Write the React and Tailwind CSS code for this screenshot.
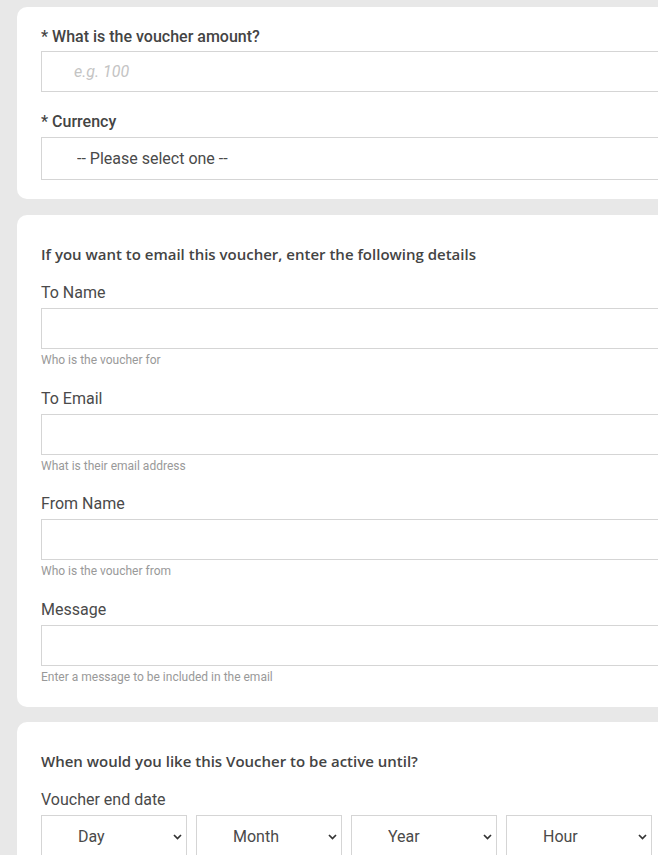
import React from 'react';

const font = { fontFamily: 'Roboto, "Noto Sans", sans-serif' };
const headFont = { fontFamily: '"Open Sans", Roboto, sans-serif' };

const Chevron = () => (
  <svg className="pointer-events-none absolute right-[5px] top-1/2 -translate-y-1/2" width="9" height="6" viewBox="0 0 9 6">
    <path d="M1 1 L4.5 4.5 L8 1" fill="none" stroke="#333" strokeWidth="1.7" />
  </svg>
);

const Field = ({ label, help }) => (
  <div className="mt-[20px]">
    <label className="block text-[16px] leading-[20px] text-[#4a4a4a]">{label}</label>
    <input className="mt-[5px] block h-[41px] w-full border border-[#d5d5d5] bg-white outline-none" />
    <p className="mt-[4px] text-[12px] leading-[15.5px] text-[#999]">{help}</p>
  </div>
);

const DateSelect = ({ label }) => (
  <div className="relative w-[146px]">
    <select className="h-[43px] w-full appearance-none border border-[#d5d5d5] bg-white pl-[36px] text-[16px] text-[#4a4a4a] outline-none">
      <option>{label}</option>
    </select>
    <Chevron />
  </div>
);

export default function App() {
  return (
    <div className="min-h-[855px] w-[658px] overflow-hidden bg-[#e8e8e8] pt-[7px]" style={font}>
      {/* Amount & currency */}
      <div className="ml-[17px] w-[700px] rounded-l-[10px] bg-white px-[24px] pb-[19px] pt-[21px]">
        <label className="block text-[16px] font-medium leading-[18px] text-[#444]">* What is the voucher amount?</label>
        <input
          placeholder="e.g. 100"
          className="mt-[5px] block h-[41px] w-full border border-[#d5d5d5] bg-white pl-[32px] text-[16px] italic outline-none placeholder:text-[#c4c4c4]"
        />
        <label className="mt-[21px] block text-[16px] font-medium leading-[18px] text-[#444]">* Currency</label>
        <select className="mt-[6px] block h-[43px] w-full appearance-none border border-[#d5d5d5] bg-white pl-[35px] text-[16px] text-[#4a4a4a] outline-none">
          <option>-- Please select one --</option>
        </select>
      </div>

      {/* Email details */}
      <div className="ml-[17px] mt-[16px] w-[700px] rounded-l-[10px] bg-white px-[24px] pb-[22px] pt-[30px]">
        <h3 className="text-[15px] font-semibold leading-[18px] text-[#444]" style={headFont}>If you want to email this voucher, enter the following details</h3>
        <Field label="To Name" help="Who is the voucher for" />
        <Field label="To Email" help="What is their email address" />
        <Field label="From Name" help="Who is the voucher from" />
        <Field label="Message" help="Enter a message to be included in the email" />
      </div>

      {/* End date */}
      <div className="ml-[17px] mt-[15px] w-[700px] rounded-l-[10px] bg-white px-[24px] pb-[20px] pt-[30px]">
        <h3 className="text-[15px] font-semibold leading-[18px] text-[#444]" style={headFont}>When would you like this Voucher to be active until?</h3>
        <label className="mt-[20px] block text-[16px] leading-[20px] text-[#4a4a4a]">Voucher end date</label>
        <div className="mt-[5px] flex gap-[9px]">
          <DateSelect label="Day" />
          <DateSelect label="Month" />
          <DateSelect label="Year" />
          <DateSelect label="Hour" />
        </div>
      </div>
    </div>
  );
}
